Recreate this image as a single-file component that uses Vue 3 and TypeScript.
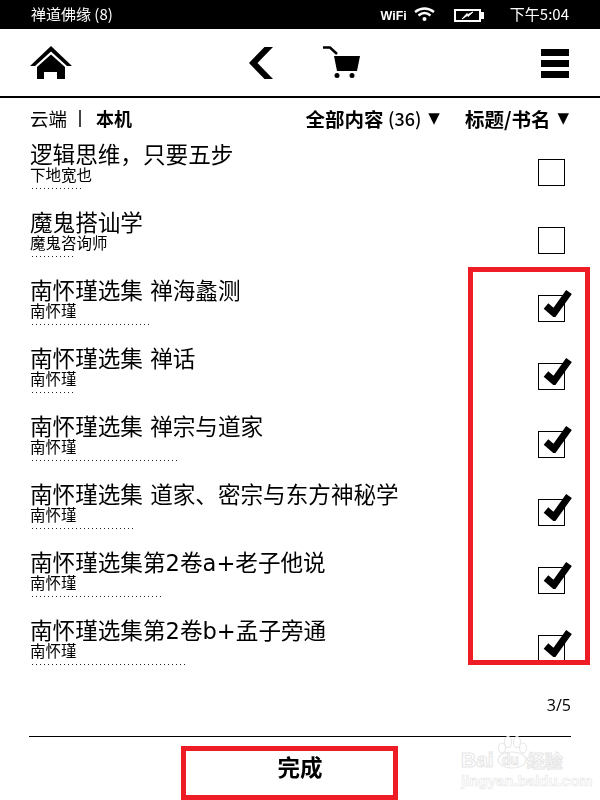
<script setup lang="ts">
interface Book { title: string; author: string; dots: number; checked: boolean }
const books: Book[] = [
  { title: '逻辑思维\uFF0C只要五步', author: '下地宽也', dots: 50, checked: false },
  { title: '魔鬼搭讪学', author: '魔鬼咨询师', dots: 42, checked: false },
  { title: '南怀瑾选集 禅海蠡测', author: '南怀瑾', dots: 118, checked: true },
  { title: '南怀瑾选集 禅话', author: '南怀瑾', dots: 42, checked: true },
  { title: '南怀瑾选集 禅宗与道家', author: '南怀瑾', dots: 146, checked: true },
  { title: '南怀瑾选集 道家、密宗与东方神秘学', author: '南怀瑾', dots: 102, checked: true },
  { title: '南怀瑾选集第2卷a+老子他说', author: '南怀瑾', dots: 130, checked: true },
  { title: '南怀瑾选集第2卷b+孟子旁通', author: '南怀瑾', dots: 154, checked: true },
]
</script>

<template>
  <div class="page">
    <header class="status">
      <span class="status-title">禅道佛缘 (8)</span>
      <div class="status-right">
        <span class="wifi-label">WiFi</span>
        <svg class="wifi" width="21" height="14" viewBox="0 0 21 14">
          <path d="M1 5 Q10.500 -2 20 5" fill="none" stroke="#fff" stroke-width="2.400" />
          <path d="M4.500 8.500 Q10.500 3.500 16.500 8.500" fill="none" stroke="#fff" stroke-width="2.400" />
          <circle cx="10.500" cy="12" r="2" fill="#fff" />
        </svg>
        <svg class="battery" width="30" height="13" viewBox="0 0 30 13">
          <rect x="1" y="1" width="25" height="11" fill="#000" stroke="#fff" stroke-width="2" />
          <rect x="27" y="3" width="3" height="7" fill="#fff" />
          <path d="M8 10 L14 6 L14 7.500 L19 3 L13 6 L13 4.500 Z" fill="#fff" stroke="#fff" stroke-width="1" />
        </svg>
        <span class="clock">下午5:04</span>
      </div>
    </header>

    <nav class="toolbar">
      <svg class="home" width="42" height="34" viewBox="0 0 42 34">
        <path d="M0 20 L21 0 L42 20 L37 20 L21 5.500 L5 20 Z" fill="#000" />
        <path d="M7 21 L21 8.500 L35 21 L35 33 L27 33 L27 26 L14 26 L14 33 L7 33 Z" fill="#000" />
      </svg>
      <div class="mid">
        <svg class="back" width="24" height="32" viewBox="0 0 24 32">
          <path d="M24 0 L15.500 0 L0 16 L15.500 32 L24 32 L8.500 16 Z" fill="#000" />
        </svg>
        <svg class="cart" width="38" height="33" viewBox="0 0 38 33">
          <path d="M0 1.500 H7 L14 8" fill="none" stroke="#000" stroke-width="2.500" />
          <path d="M11 10 H37 L34 25 H14 Z" fill="#000" />
          <circle cx="14" cy="29.500" r="2.500" fill="#000" />
          <circle cx="29" cy="29.500" r="2.500" fill="#000" />
        </svg>
      </div>
      <div class="menu"><i></i><i></i><i></i></div>
    </nav>

    <section class="filters">
      <div class="tabs">
        <span>云端</span><i class="sep"></i><b>本机</b>
      </div>
      <div class="sorts">
        <b>全部内容&nbsp;<span class="count">(36)</span><em>▼</em></b>
        <b>标题/书名<em>▼</em></b>
      </div>
    </section>

    <ul class="list">
      <li v-for="book in books" :key="book.title" class="row">
        <div class="info">
          <div class="title">{{ book.title }}</div>
          <div class="author">{{ book.author }}</div>
          <div class="dots" :style="{ width: book.dots + 'px' }"></div>
        </div>
        <div class="box">
          <svg v-if="book.checked" class="tick" width="31" height="29" viewBox="0 0 31 29">
            <path d="M4 18 L12 25 L27 4" fill="none" stroke="#000" stroke-width="7" />
          </svg>
        </div>
      </li>
    </ul>

    <div class="pager">3/5</div>

    <footer class="footer">
      <b class="done">完成</b>
    </footer>

    <div class="mark mark-list"></div>
    <div class="mark mark-done"></div>

    <div class="watermark">
      <svg class="paw" width="32" height="34" viewBox="0 0 32 34">
        <g fill="#fff" stroke="#e8e8e8" stroke-width="1.200">
          <ellipse cx="6" cy="13" rx="3.500" ry="5" />
          <ellipse cx="12" cy="7" rx="3.500" ry="5.500" />
          <ellipse cx="21" cy="7" rx="3.500" ry="5.500" />
          <ellipse cx="27" cy="13" rx="3.500" ry="5" />
          <ellipse cx="16" cy="25" rx="14" ry="8" />
        </g>
      </svg>
      <div class="wm-main"><span>Bai</span><span class="wm-du">du</span><span class="wm-cn">经验</span></div>
      <div class="wm-sub">jingyan.baidu.com</div>
    </div>
  </div>
</template>

<style>
html, body { margin: 0; padding: 0; background: #fff; }
</style>

<style scoped>
.page {
  position: relative;
  width: 600px;
  height: 800px;
  overflow: hidden;
  background: #fff;
  color: #000;
  display: flex;
  flex-direction: column;
  font-family: "Noto Sans CJK SC", "Liberation Sans", sans-serif;
}
.status, .toolbar, .filters, .list, .pager, .footer { filter: grayscale(1); }
.status {
  height: 29px;
  flex: none;
  background: #000;
  color: #fff;
  display: flex;
  align-items: center;
  justify-content: space-between;
  padding: 0 31px 3px 31px;
  box-sizing: border-box;
  font-size: 15px;
}
.status-right { display: flex; align-items: center; }
.wifi-label {
  font: bold 12.500px "Liberation Sans", sans-serif;
  margin-top: 5px;
}
.wifi { margin: 2px 0 0 7px; }
.battery { margin: 4px 0 0 19px; }
.clock { margin-left: 26px; }
.toolbar {
  height: 67px;
  flex: none;
  box-sizing: border-box;
  display: flex;
  align-items: center;
  padding: 1px 31px 0 30px;
}
.home { flex: none; }
.mid {
  display: flex;
  align-items: center;
  margin-left: 177px;
}
.cart { margin-left: 50px; margin-top: -2px; }
.menu {
  margin-left: auto;
  width: 28px;
  height: 29px;
  display: flex;
  flex-direction: column;
  justify-content: space-between;
}
.menu i { display: block; height: 7px; background: #000; }
.filters {
  flex: none;
  border-top: 2px solid #000;
  display: flex;
  align-items: center;
  justify-content: space-between;
  padding: 0 30px 2px;
  box-sizing: content-box;
  height: 40px;
  font-size: 18.500px;
}
.tabs { display: flex; align-items: center; }
.tabs b { font-size: 18px; }
.sep { display: block; width: 2px; height: 17px; background: #444; margin: 0 15px 0 12px; }
.sorts { display: flex; gap: 25px; font-size: 19.500px; margin-right: 1px; }
.sorts b { font-weight: 700; display: flex; align-items: center; white-space: nowrap; }
.sorts .count { font-size: 18px; font-weight: 500; }
.sorts em { font-style: normal; font-size: 15px; font-family: "DejaVu Sans", sans-serif; margin-left: 7px; }
.list {
  list-style: none;
  margin: 0;
  padding: 0;
  flex: none;
}
.row {
  height: 68px;
  display: flex;
  align-items: flex-start;
  justify-content: space-between;
  padding: 0 35px 0 30px;
}
.info { display: flex; flex-direction: column; }
.title {
  font-family: "DejaVu Sans", "Noto Sans CJK SC", sans-serif;
  font-size: 22.600px;
  line-height: 22px;
  margin-top: 4px;
  white-space: nowrap;
}
.author {
  font-size: 15.500px;
  line-height: 16px;
}
.dots {
  height: 1px;
  margin: 6px 0 0 2px;
  background: repeating-linear-gradient(90deg, #222 0 1px, transparent 1px 4px);
}
.box {
  position: relative;
  width: 27px;
  height: 27px;
  margin-top: 19px;
  border: 1px solid #000;
  box-sizing: border-box;
  flex: none;
}
.tick { position: absolute; left: 3px; top: -8px; }
.pager {
  margin-top: 9px;
  padding-right: 29px;
  text-align: right;
  font-size: 16px;
  line-height: 24px;
  flex: none;
  font-family: "Open Sans", sans-serif;
}
.footer {
  margin: 19px 29px 0;
  border-top: 1px solid #000;
  flex: 1;
  display: flex;
  justify-content: center;
}
.done {
  font-size: 22.500px;
  line-height: 30px;
  margin: 14px 0 0 0;
}
.mark {
  position: absolute;
  border: 5px solid #ee1c25;
  box-sizing: border-box;
}
.mark-list { left: 468px; top: 267px; width: 122px; height: 398px; }
.mark-done { left: 181px; top: 746px; width: 217px; height: 54px; }
.watermark {
  position: absolute;
  left: 461px;
  top: 735px;
  width: 130px;
  height: 60px;
  color: #fff;
  font-family: "Liberation Sans", sans-serif;
  -webkit-text-stroke: 1px #e6e6e6;
}
.paw { position: absolute; left: 35px; top: 0; }
.wm-main {
  position: absolute;
  left: 0;
  top: 13px;
  font-size: 21px;
  font-weight: 700;
  line-height: 24px;
  white-space: nowrap;
  display: flex;
  align-items: center;
}
.wm-du { font-size: 14px; margin-left: 8px; }
.wm-cn { font-size: 18px; font-family: "Noto Sans CJK SC", sans-serif; margin-left: 8px; }
.wm-sub {
  position: absolute;
  left: 0;
  top: 38px;
  font-size: 15px;
  line-height: 16px;
  font-weight: 700;
  white-space: nowrap;
  -webkit-text-stroke: .6px #e6e6e6;
}
</style>
